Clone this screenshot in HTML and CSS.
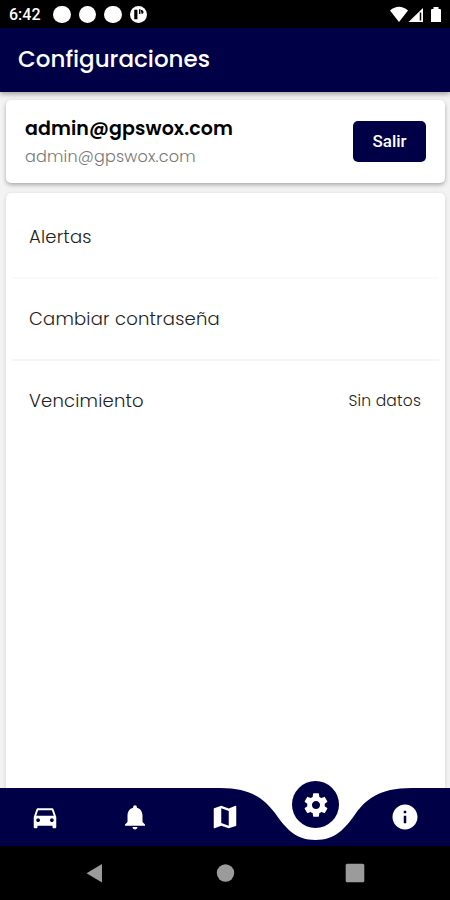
FILE: index.html
```
<!DOCTYPE html>
<html lang="es">
<head>
  <meta charset="UTF-8" />
  <meta name="viewport" content="width=device-width, initial-scale=1.0"/>
  <title>Configuraciones</title>
  <link rel="stylesheet" href="styles.css">
</head>
<body>
  <div class="screen">

    <div class="status-bar">
      <span class="clock">6:42</span>
      <div class="notifications">
        <span class="dot"></span>
        <span class="dot"></span>
        <span class="dot"></span>
        <svg class="app-icon" viewBox="0 0 16 16">
          <circle cx="8" cy="8" r="8" fill="#fff"/>
          <path d="M4 3.500h3v9H4zM8.500 3h1.300v4.500H8.500zM10 3.500c3.500.5 3.500 3.500 1 4z" fill="#000"/>
        </svg>
      </div>
      <svg class="system-icons" viewBox="0 0 52 17">
        <path d="M0 4.500Q9 -3 18 4.500L9 16z" fill="#fff"/>
        <path d="M18.500 16L33 2v14z" fill="#fff"/>
        <path d="M30.500 6.500v8" stroke="#000" stroke-width="1.500"/>
        <path d="M41 4q0-1 1-1h1.500V1h5v2H50q1 0 1 1v12H41z" fill="#fff"/>
      </svg>
    </div>

    <header>
      <h1>Configuraciones</h1>
    </header>

    <main>
      <section class="card account">
        <div>
          <div class="user-name">admin@gpswox.com</div>
          <div class="user-email">admin@gpswox.com</div>
        </div>
        <button class="logout">Salir</button>
      </section>

      <section class="card settings">
        <div class="row light"><span>Alertas</span></div>
        <div class="row"><span>Cambiar contraseña</span></div>
        <div class="row">
          <span>Vencimiento</span>
          <span class="value">Sin datos</span>
        </div>
      </section>
    </main>

    <nav class="tabs">
      <svg class="tabs-shape" viewBox="0 0 450 58">
        <path d="M0 0H220C252 0 265 12 275 25C286 41 296 52 315.500 52C335 52 345 41 356 25C366 12 378 0 412 0H450V58H0z" fill="#000047"/>
      </svg>
      <a class="tab">
        <svg viewBox="0 0 24 24"><path d="M18.920 6.010C18.720 5.420 18.160 5 17.500 5h-11c-.66 0-1.210.42-1.420 1.010L3 12v8c0 .55.45 1 1 1h1c.55 0 1-.45 1-1v-1h12v1c0 .55.45 1 1 1h1c.55 0 1-.45 1-1v-8l-2.080-5.990zM6.500 16c-.83 0-1.500-.67-1.500-1.500S5.670 13 6.500 13s1.500.67 1.500 1.500S7.330 16 6.500 16zm11 0c-.83 0-1.500-.67-1.500-1.500s.67-1.500 1.500-1.500 1.500.67 1.500 1.500-.67 1.500-1.500 1.500zM5 11l1.500-4.500h11L19 11H5z"/></svg>
      </a>
      <a class="tab">
        <svg viewBox="0 0 24 24"><path d="M12 22c1.100 0 2-.9 2-2h-4c0 1.100.89 2 2 2zm6-6v-5c0-3.070-1.640-5.640-4.500-6.320V4c0-.83-.67-1.500-1.500-1.500s-1.500.67-1.500 1.500v.68C7.630 5.360 6 7.920 6 11v5l-2 2v1h16v-1l-2-2z"/></svg>
      </a>
      <a class="tab">
        <svg viewBox="0 0 24 24"><path d="M20.500 3l-.16.03L15 5.100 9 3 3.360 4.900c-.21.07-.36.25-.36.48V20.500c0 .28.22.5.5.5l.16-.03L9 18.900l6 2.100 5.640-1.900c.21-.07.36-.25.36-.48V3.500c0-.28-.22-.5-.5-.5zM15 19l-6-2.110V5l6 2.110V19z"/></svg>
      </a>
      <a class="tab active">
        <span class="bubble">
          <svg viewBox="0 0 24 24"><path d="M19.430 12.980c.04-.32.07-.64.07-.98s-.03-.66-.07-.98l2.110-1.650c.19-.15.24-.42.12-.64l-2-3.460c-.12-.22-.39-.3-.61-.22l-2.490 1c-.52-.4-1.080-.73-1.690-.98l-.38-2.650C14.460 2.180 14.250 2 14 2h-4c-.25 0-.46.18-.49.42l-.38 2.650c-.61.25-1.170.59-1.690.98l-2.490-1c-.23-.09-.49 0-.61.22l-2 3.460c-.13.22-.07.49.12.64l2.110 1.650c-.04.32-.07.65-.07.98s.03.66.07.98l-2.110 1.650c-.19.15-.24.42-.12.64l2 3.460c.12.22.39.3.61.22l2.490-1c.52.4 1.080.73 1.690.98l.38 2.650c.03.24.24.42.49.42h4c.25 0 .46-.18.49-.42l.38-2.650c.61-.25 1.170-.59 1.690-.98l2.490 1c.23.09.49 0 .61-.22l2-3.460c.12-.22.07-.49-.12-.64l-2.110-1.650zM12 15.500c-1.930 0-3.500-1.570-3.500-3.500s1.570-3.500 3.500-3.500 3.500 1.570 3.500 3.500-1.570 3.500-3.500 3.500z"/></svg>
        </span>
      </a>
      <a class="tab">
        <svg viewBox="0 0 24 24"><path d="M12 2C6.480 2 2 6.480 2 12s4.480 10 10 10 10-4.480 10-10S17.520 2 12 2zm1 15h-2v-6h2v6zm0-8h-2V7h2v2z"/></svg>
      </a>
    </nav>

    <div class="system-nav">
      <svg viewBox="0 0 20 20"><path d="M17 1v18.500L1.500 10.300z"/></svg>
      <svg viewBox="0 0 20 20"><circle cx="10.500" cy="10" r="8.700"/></svg>
      <svg viewBox="0 0 20 20"><rect x=".7" y=".7" width="18.600" height="18.600" rx="1.500"/></svg>
    </div>

  </div>
</body>
</html>
```
FILE: styles.css
```
* {
  box-sizing: border-box;
}

body {
  font-family: Poppins, Inter, sans-serif;
  margin: 0;
  background: #fff;
  color: #222;
}

.screen {
  display: flex;
  flex-direction: column;
  height: 900px;
  width: 450px;
  overflow: hidden;
}

.status-bar {
  display: flex;
  align-items: center;
  height: 28px;
  padding: 1px 8px 0 9px;
  background: #000;
  color: #fff;
}

.clock {
  width: 44px;
  font: 500 16px Roboto, sans-serif;
}

.notifications {
  display: flex;
  gap: 8px;
}

.dot {
  width: 17.500px;
  height: 17.500px;
  border-radius: 50%;
  background: #fff;
}

.app-icon {
  width: 17px;
  height: 17px;
}

.system-icons {
  width: 52px;
  height: 17px;
  margin-left: auto;
}

header {
  position: relative;
  z-index: 1;
  display: flex;
  align-items: center;
  height: 64px;
  padding: 0 18px;
  background: #000047;
  color: #fff;
  box-shadow: 0 2px 5px rgba(0,0,0,0.35);
}

h1 {
  margin: 0;
  padding-bottom: 2px;
  font-size: 23px;
  font-weight: 500;
}

main {
  flex: 1;
  display: flex;
  flex-direction: column;
  gap: 10px;
  padding: 8px 5px 0 6px;
  background: #f3f3f3;
}

.card {
  background: #fff;
  border-radius: 5px;
}

.account {
  display: flex;
  align-items: center;
  justify-content: space-between;
  height: 83px;
  padding: 2px 19px 0;
  box-shadow: 0 2px 4px rgba(0,0,0,0.3);
}

.user-name {
  font-size: 19px;
  font-weight: 600;
  line-height: 28px;
  letter-spacing: 0.1px;
  color: #000;
}

.user-email {
  font-size: 16px;
  font-weight: 300;
  line-height: 28px;
  letter-spacing: 0.2px;
  color: #777;
}

.logout {
  width: 73px;
  height: 41px;
  margin-bottom: 3px;
  padding: 0;
  border: none;
  border-radius: 5px;
  background: #000047;
  color: #fff;
  font: 500 17px Roboto, sans-serif;
}

.settings {
  flex: 1;
  padding: 3px 6px 0;
  border-radius: 5px 5px 0 0;
  box-shadow: 0 1px 4px rgba(0,0,0,0.15);
}

.row {
  display: flex;
  align-items: center;
  justify-content: space-between;
  height: 82.500px;
  padding: 0 18px 0 17px;
  border-bottom: 2px solid #f5f5f5;
  font-size: 18px;
  font-weight: 300;
  letter-spacing: 0.2px;
}

.row.light {
  border-color: #fafafa;
}

.row:last-child {
  height: 79.500px;
  border: none;
}

.value {
  font-size: 15.500px;
}

.tabs {
  position: relative;
  display: flex;
  height: 58px;
  background: #fff;
}

.tabs-shape {
  position: absolute;
  inset: 0;
  width: 450px;
  height: 58px;
}

.tab {
  position: relative;
  flex: 1;
  display: flex;
  align-items: center;
  justify-content: center;
}

.tab svg {
  width: 30px;
  height: 30px;
  fill: #fff;
}

/* the selected tab sits in a circle raised above the notch */
.bubble {
  position: absolute;
  top: -7px;
  left: 22px;
  display: flex;
  align-items: center;
  justify-content: center;
  width: 47px;
  height: 47px;
  border-radius: 50%;
  background: #000047;
}

.bubble svg {
  width: 28px;
  height: 28px;
}

.system-nav {
  display: flex;
  align-items: center;
  justify-content: space-between;
  height: 54px;
  padding: 0 85px;
  background: #000;
}

.system-nav svg {
  width: 20px;
  height: 20px;
  fill: #9b9b9b;
}
```
